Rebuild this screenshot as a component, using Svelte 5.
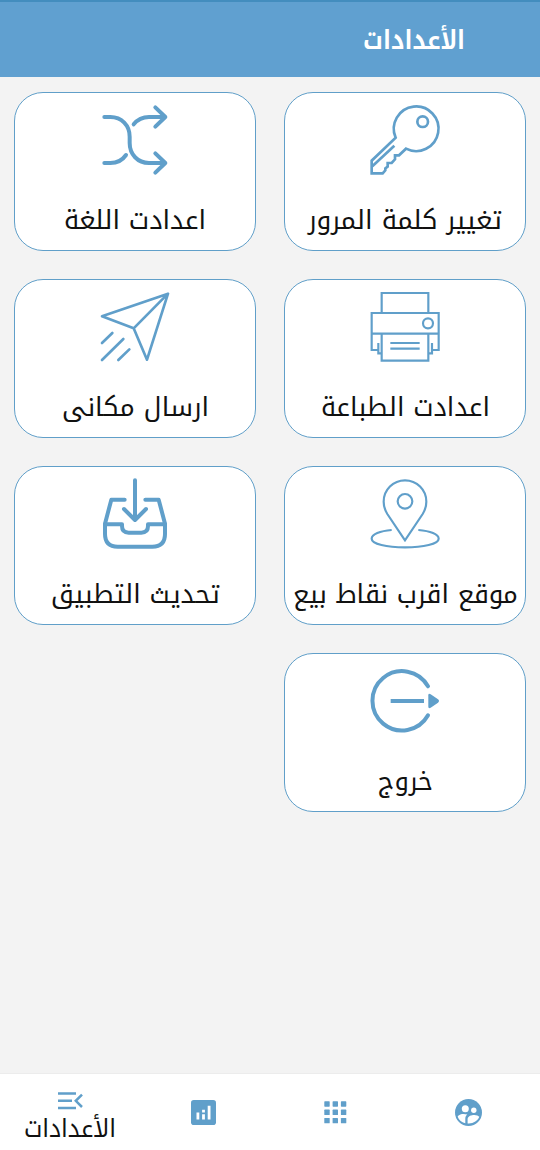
<script lang="ts">
  const cards = [
    { icon: 'key', label: 'تغيير كلمة المرور', width: 194 },
    { icon: 'shuffle', label: 'اعدادت اللغة', width: 142 },
    { icon: 'printer', label: 'اعدادت الطباعة', width: 169 },
    { icon: 'send', label: 'ارسال مكانى', width: 147 },
    { icon: 'location', label: 'موقع اقرب نقاط بيع', width: 225 },
    { icon: 'update', label: 'تحديث التطبيق', width: 169 },
    { icon: 'exit', label: 'خروج', width: 55 }
  ];

  const dots = [2.2, 10.5, 18.8];
</script>

{#snippet fitted(text: string, width: number)}
  <svg class="fitted" width={width} height="36" direction="rtl">
    <text x={width / 2} y="28" text-anchor="middle" textLength={width} lengthAdjust="spacingAndGlyphs">{text}</text>
  </svg>
{/snippet}

<div class="screen" dir="rtl">
  <header>
    <h1>{@render fitted('الأعدادات', 102)}</h1>
  </header>

  <main>
    {#each cards as card}
      <button class="card">
        <svg class="icon" viewBox="270 60 210 210">
          {#if card.icon === 'key'}
            <path d="M347 158A67 67 0 1 1 378 191L357 211H345V223L335 234H323V245L316 250V256L308 265H275V227Z" />
            <path d="M277 244L343 182" />
            <circle cx="428" cy="110" r="16" />
          {:else if card.icon === 'shuffle'}
            <g class="thick round">
              <path d="M283 96H301C335 96 359 121 359 155V174C359 208 383 234 417 234H466M436 205L466 234L436 263" />
              <path d="M371 118C383 103 400 96 417 96H466M436 67L466 96L436 125" />
              <path d="M283 234H301C320 234 337 226 348 210" />
            </g>
          {:else if card.icon === 'printer'}
            <g class="thin">
              <path d="M305 123V63H445V123M275 123H476V185H275ZM305 185V266H445V185M275 185V234H295M476 185V234H456M295 213V244H304M456 213V244H447M331 213H419M331 230H419" />
              <circle cx="444" cy="154" r="15" />
            </g>
          {:else if card.icon === 'send'}
            <path class="round" d="M474 65L276 133L371 169L411 263ZM371 169L474 65M276 213L307 183M276 264L340 201M325 264L358 232" />
          {:else if card.icon === 'location'}
            <g class="thin">
              <path d="M375 244L322 165C314 152 311 142 311 128A64 64 0 0 1 439 128C439 142 436 152 428 165Z" />
              <circle cx="375" cy="127" r="22" />
              <path d="M335 213C300 216 275 226 275 239C275 255 320 265 375 265S476 255 476 239C476 226 451 216 415 213" />
            </g>
          {:else if card.icon === 'update'}
            <g class="thick round">
              <path d="M375 64V181M342 150L375 183L408 150" />
              <path d="M344 122H304L285 194V225Q285 263 323 263H427Q465 263 465 225V194L446 122H406" />
              <path d="M285 196H336V201Q336 221 356 221H394Q414 221 414 201V196H465" />
            </g>
          {:else}
            <path class="thick round" d="M444 121A89 89 0 1 0 444 208" />
            <path class="thick" d="M332 165H432" />
            <path class="solid" d="M445 148Q445 141 452 145L474 160Q480 165 474 170L452 185Q445 189 445 182Z" />
          {/if}
        </svg>
        {@render fitted(card.label, card.width)}
      </button>
    {/each}
  </main>

  <nav>
    <button>
      <svg class="nav-icon group" viewBox="0 0 27 27">
        <circle cx="13.5" cy="13.5" r="13.5" />
        <circle class="cut" cx="10.3" cy="9.7" r="3.5" />
        <circle class="cut" cx="18.8" cy="11.2" r="2.7" />
        <path class="cut" d="M2.7 17.3C5.2 14.5 9.2 14.6 12.3 15.5C10.7 16.8 10.3 18 10.3 20V24.2C6.6 23.4 3.5 21 2.7 17.3Z" />
        <path class="cut" d="M12.6 24.4V20.2C12.6 16.5 17.4 15.8 19.3 15.9C21.6 16 23.5 16.7 24.3 17.8C22.6 22 18 24.9 12.6 24.4Z" />
      </svg>
    </button>
    <button>
      <svg class="nav-icon apps" viewBox="0 0 23 23">
        {#each dots as y}
          {#each dots as x}
            <rect x={x - 1.9} y={y - 1.9} width="5.4" height="5.4" rx="0.6" />
          {/each}
        {/each}
      </svg>
    </button>
    <button>
      <svg class="nav-icon chart" viewBox="0 0 25 25">
        <rect width="25" height="25" rx="2.8" />
        <path class="cut" d="M5.5 12.5H8.3V19.5H5.5ZM11.1 14.2H13.9V19.5H11.1ZM11.1 9.8H13.9V12.5H11.1ZM16.7 5.7H19.5V19.5H16.7Z" />
      </svg>
    </button>
    <button class="active">
      <svg class="nav-icon menu" viewBox="0 0 25 18">
        <path d="M0 1.6H18M0 8.8H14M0 16H18M24 2.6L17.8 8.8L24 15" />
      </svg>
      {@render fitted('الأعدادات', 92)}
    </button>
  </nav>
</div>

<style>
  :global(body) {
    margin: 0;
  }

  .screen {
    display: flex;
    flex-direction: column;
    width: 540px;
    height: 1150px;
    background: #f3f3f3;
    font-family: 'Noto Kufi Arabic', 'DejaVu Sans', sans-serif;
  }

  header {
    box-sizing: border-box;
    height: 77px;
    padding: 21px 75px 0 0;
    border-top: 2px solid #438dbe;
    background: #60a0d0;
  }

  h1 {
    margin: 0;
    color: #fff;
    font-size: 26px;
    line-height: 0;
  }

  header .fitted {
    margin-top: -2px;
  }

  button {
    padding: 0;
    border: 0;
    background: none;
    color: #111;
    font: inherit;
  }

  main {
    flex: 1;
    display: grid;
    grid-template-columns: 242px 242px;
    grid-auto-rows: 159px;
    align-content: start;
    gap: 28px;
    padding: 14.5px 14px 0;
  }

  .card {
    box-sizing: border-box;
    display: flex;
    flex-direction: column;
    align-items: center;
    gap: 26px;
    padding-top: 12px;
    border: 1.5px solid #609fc9;
    border-radius: 29px;
    background: #fff;
    font-size: 26px;
  }

  .icon {
    flex: none;
    width: 70px;
    height: 70px;
    fill: none;
    stroke: #609fca;
    stroke-width: 8;
    overflow: visible;
  }

  .thin {
    stroke-width: 6.5;
  }

  .thick {
    stroke-width: 12;
  }

  .round {
    stroke-linecap: round;
    stroke-linejoin: round;
  }

  .solid {
    fill: #609fca;
    stroke: none;
  }

  .fitted {
    flex: none;
    display: block;
    overflow: visible;
    fill: currentColor;
  }

  nav {
    box-sizing: border-box;
    display: grid;
    grid-template-columns: 139px 127px 138px 128px;
    height: 77px;
    padding: 0 2px 0 6px;
    border-top: 1px solid #ececec;
    background: #fff;
  }

  nav button {
    display: flex;
    flex-direction: column;
    align-items: center;
    justify-content: center;
    font-size: 25px;
  }

  nav .active {
    justify-content: flex-start;
    padding-top: 18px;
  }

  nav .fitted {
    margin-top: -1px;
  }

  .nav-icon {
    fill: #609fca;
  }

  .cut {
    fill: #fff;
  }

  .group {
    width: 27px;
    height: 27px;
  }

  .apps {
    width: 23px;
    height: 23px;
  }

  .chart {
    width: 25px;
    height: 25px;
  }

  .menu {
    flex: none;
    width: 25px;
    height: 18px;
    fill: none;
    stroke: #609fca;
    stroke-width: 2.5;
  }
</style>
